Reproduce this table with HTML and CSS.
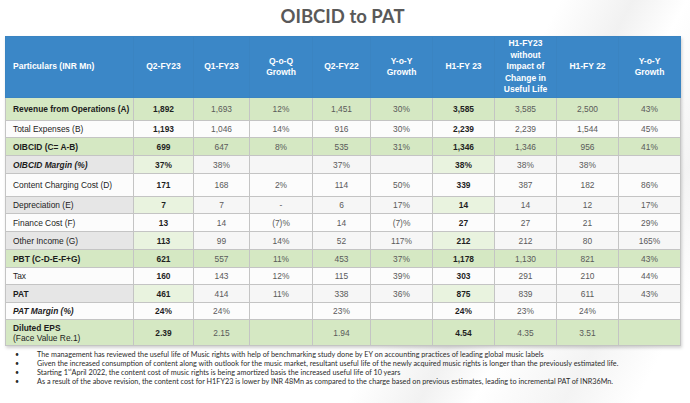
FILE: index.html
```html
<!DOCTYPE html>
<html lang="en">
<head>
<meta charset="utf-8">
<title>OIBCID to PAT</title>
<link rel="stylesheet" href="styles.css">
</head>
<body>
<div class="slide">
  <h1 class="title">OIBCID to PAT</h1>
  <table class="fin">
    <colgroup>
      <col class="c-label"><col class="c-q2"><col class="c-q1"><col class="c-qoq"><col class="c-q2p"><col class="c-yoy"><col class="c-h1"><col class="c-h1w"><col class="c-h1p"><col class="c-yoy2">
    </colgroup>
    <thead>
      <tr class="r-head">
        <th class="lbl">Particulars (INR Mn)</th>
        <th>Q2-FY23</th>
        <th>Q1-FY23</th>
        <th>Q-o-Q<br>Growth</th>
        <th>Q2-FY22</th>
        <th>Y-o-Y<br>Growth</th>
        <th>H1-FY 23</th>
        <th>H1-FY23<br>without<br>Impact of<br>Change in<br>Useful Life</th>
        <th>H1-FY 22</th>
        <th>Y-o-Y<br>Growth</th>
      </tr>
    </thead>
    <tbody>
      <tr class="green h23">
        <td class="lbl b">Revenue from Operations (A)</td>
        <td class="hl">1,892</td><td>1,693</td><td>12%</td><td>1,451</td><td>30%</td><td class="hl">3,585</td><td>3,585</td><td>2,500</td><td>43%</td>
      </tr>
      <tr class="plain h17 w">
        <td class="lbl">Total Expenses (B)</td>
        <td class="hl">1,193</td><td>1,046</td><td>14%</td><td>916</td><td>30%</td><td class="hl">2,239</td><td>2,239</td><td>1,544</td><td>45%</td>
      </tr>
      <tr class="green h18">
        <td class="lbl b">OIBCID (C= A-B)</td>
        <td class="hl">699</td><td>647</td><td>8%</td><td>535</td><td>31%</td><td class="hl">1,346</td><td>1,346</td><td>956</td><td>41%</td>
      </tr>
      <tr class="plain h18">
        <td class="lbl b i">OIBCID Margin (%)</td>
        <td class="hl">37%</td><td>38%</td><td></td><td>37%</td><td></td><td class="hl">38%</td><td>38%</td><td>38%</td><td></td>
      </tr>
      <tr class="plain h23 w">
        <td class="lbl">Content Charging Cost (D)</td>
        <td class="hl">171</td><td>168</td><td>2%</td><td>114</td><td>50%</td><td class="hl">339</td><td>387</td><td>182</td><td>86%</td>
      </tr>
      <tr class="plain h17">
        <td class="lbl">Depreciation (E)</td>
        <td class="hl">7</td><td>7</td><td>-</td><td>6</td><td>17%</td><td class="hl">14</td><td>14</td><td>12</td><td>17%</td>
      </tr>
      <tr class="plain h18 w">
        <td class="lbl">Finance Cost (F)</td>
        <td class="hl">13</td><td>14</td><td>(7)%</td><td>14</td><td>(7)%</td><td class="hl">27</td><td>27</td><td>21</td><td>29%</td>
      </tr>
      <tr class="plain h18">
        <td class="lbl">Other Income (G)</td>
        <td class="hl">113</td><td>99</td><td>14%</td><td>52</td><td>117%</td><td class="hl">212</td><td>212</td><td>80</td><td>165%</td>
      </tr>
      <tr class="green h18">
        <td class="lbl b">PBT (C-D-E-F+G)</td>
        <td class="hl">621</td><td>557</td><td>11%</td><td>453</td><td>37%</td><td class="hl">1,178</td><td>1,130</td><td>821</td><td>43%</td>
      </tr>
      <tr class="plain h17 w">
        <td class="lbl">Tax</td>
        <td class="hl">160</td><td>143</td><td>12%</td><td>115</td><td>39%</td><td class="hl">303</td><td>291</td><td>210</td><td>44%</td>
      </tr>
      <tr class="plain h18">
        <td class="lbl b">PAT</td>
        <td class="hl">461</td><td>414</td><td>11%</td><td>338</td><td>36%</td><td class="hl">875</td><td>839</td><td>611</td><td>43%</td>
      </tr>
      <tr class="plain h17 w">
        <td class="lbl b i">PAT Margin (%)</td>
        <td class="hl">24%</td><td>24%</td><td></td><td>23%</td><td></td><td class="hl">24%</td><td>23%</td><td>24%</td><td></td>
      </tr>
      <tr class="green h26">
        <td class="lbl"><span class="b">Diluted EPS</span><br>(Face Value Re.1)</td>
        <td class="hl">2.39</td><td>2.15</td><td></td><td>1.94</td><td></td><td class="hl">4.54</td><td>4.35</td><td>3.51</td><td></td>
      </tr>
    </tbody>
  </table>
  <ul class="notes">
    <li>The management has reviewed the useful life of Music rights with help of benchmarking study done by EY on accounting practices of leading global music labels</li>
    <li>Given the increased consumption of content along with outlook for the music market, resultant useful life of the newly acquired music rights is longer than the previously estimated life.</li>
    <li>Starting 1<sup>st</sup> April 2022, the content cost of music rights is being amortized basis the increased useful life of 10 years</li>
    <li>As a result of the above revision, the content cost for H1FY23 is lower by INR 48Mn as compared to the charge based on previous estimates, leading to incremental PAT of INR36Mn.</li>
  </ul>
</div>
</body>
</html>
```

FILE: styles.css
```css
html, body {
  margin: 0;
  padding: 0;
}

body {
  width: 690px;
  height: 403px;
  overflow: hidden;
  background:
    linear-gradient(118deg, rgba(255,255,255,0) 62%, rgba(230,230,230,0.55) 70%, rgba(255,255,255,0) 76%, rgba(232,232,232,0.5) 86%, rgba(255,255,255,0) 94%),
    #ffffff;
  font-family: "Liberation Sans", Arial, sans-serif;
}

.slide {
  display: flex;
  flex-direction: column;
  padding: 0 10px 0 5px;
}

.title {
  margin: 0;
  height: 36px;
  display: flex;
  align-items: center;
  justify-content: center;
  font-family: Lato, "Liberation Sans", sans-serif;
  font-size: 18.5px;
  font-weight: bold;
  color: #595959;
  padding-bottom: 5px;
  box-sizing: border-box;
}

.fin {
  width: 675px;
  table-layout: fixed;
  border-collapse: collapse;
  font-size: 8.4px;
  line-height: 10px;
  box-shadow: 1px 2px 3px rgba(0,0,0,0.18);
}

.c-label { width: 128px; }
.c-q2 { width: 60px; }
.c-q1 { width: 56px; }
.c-qoq { width: 63px; }
.c-q2p { width: 58px; }
.c-yoy { width: 62px; }
.c-h1 { width: 62px; }
.c-h1w { width: 62px; }
.c-h1p { width: 62px; }
.c-yoy2 { width: 62px; }

.r-head {
  height: 61px;
  background: #3b87c7;
}

.r-head th {
  color: #ffffff;
  font-weight: bold;
  font-size: 8.5px;
  line-height: 11.4px;
  text-align: center;
  padding: 0 2px;
  border: 1px solid #3a84c2;
}

.r-head th.lbl {
  text-align: left;
  padding-left: 7px;
}

.fin td {
  padding: 0 2px;
  text-align: center;
  border: 1px solid #c4c4c4;
  color: #5a5a5a;
  background: #f6f6f6;
}

.fin tr.w td { background: #fcfcfc; }

.fin td.lbl {
  text-align: left;
  padding-left: 7px;
  color: #1c1c1c;
  background: #e6e6e6;
  white-space: nowrap;
}

.fin td.hl {
  background: #e9f3df;
  color: #1f1f1f;
  font-weight: bold;
}

.fin tr.green td,
.fin tr.green td.lbl,
.fin tr.green td.hl {
  background: #d5e8c3;
}

.b { font-weight: bold; }
.i { font-style: italic; }

.h17 { height: 17px; }
.h18 { height: 18px; }
.h23 { height: 23px; }
.h26 { height: 26px; }

.notes {
  list-style: none;
  margin: 4px 0 0 0;
  padding: 0 0 0 10px;
  font-family: Lato, "Liberation Sans", sans-serif;
  font-size: 7.25px;
  line-height: 9px;
  color: #2b2b2b;
  white-space: nowrap;
}

.notes li {
  display: flex;
}

.notes li::before {
  content: "\2022";
  flex: 0 0 22px;
  font-size: 7px;
}

.notes sup {
  font-size: 4.5px;
  line-height: 1;
  vertical-align: super;
}
```
